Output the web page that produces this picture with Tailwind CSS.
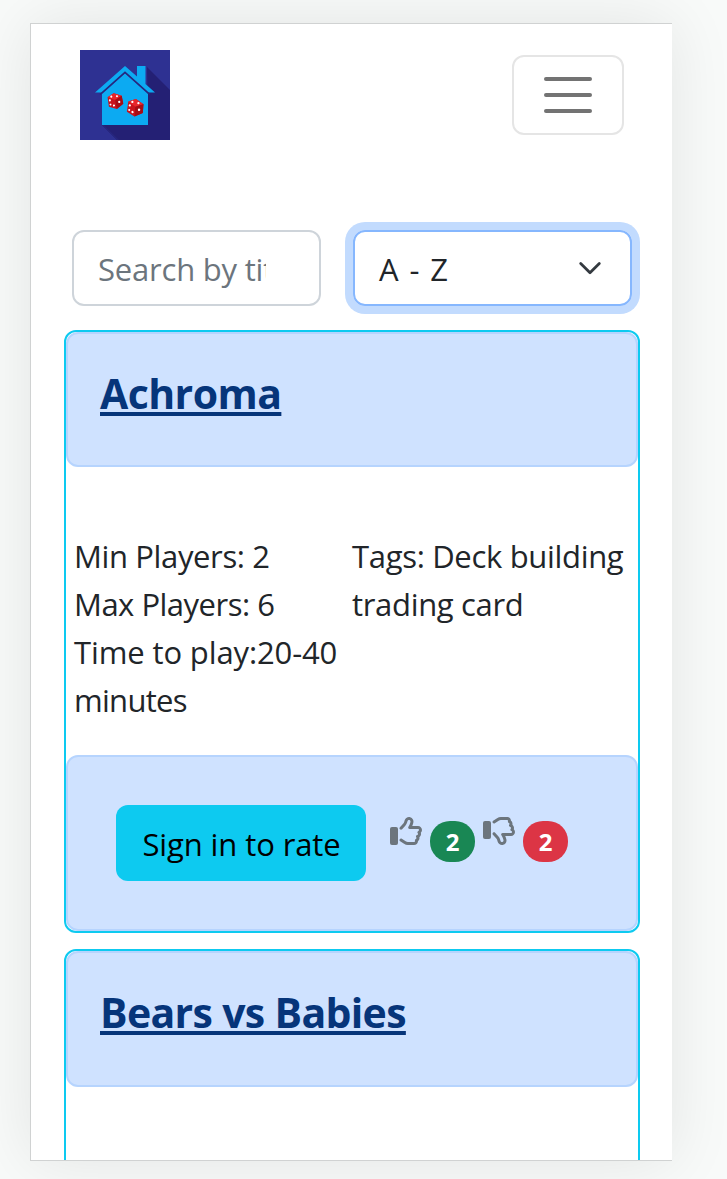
<!DOCTYPE html>
<html lang="en">
<head>
<meta charset="utf-8">
<title>Board games</title>
<script src="https://cdn.jsdelivr.net/npm/@tailwindcss/browser@4"></script>
</head>
<body class="h-[1179px] overflow-hidden bg-[#f8faf9] pt-[23px] pl-[30px] font-['Open_Sans','Noto_Sans',sans-serif] text-[31px] leading-[48px] text-[#212529]">
<svg class="hidden">
  <symbol id="hand" viewBox="0 0 512 512"><path d="M323.8 34.8c-38.2-10.9-78.1 11.2-89 49.4l-5.7 20c-3.7 13-10.4 25-19.5 35l-51.3 56.4c-8.9 9.8-8.2 25 1.6 33.9s25 8.2 33.9-1.6l51.3-56.4c14.1-15.5 24.4-34 30.1-54.1l5.7-20c3.6-12.7 16.9-20.1 29.7-16.5s20.1 16.9 16.5 29.7l-5.7 20c-5.7 19.9-14.7 38.7-26.6 55.5c-5.2 7.3-5.8 16.9-1.7 24.9s12.3 13 21.3 13L448 224c8.8 0 16 7.2 16 16c0 6.8-4.3 12.7-10.4 15c-7.4 2.8-13 9-14.9 16.7s.1 15.8 5.3 21.7c2.5 2.8 4 6.5 4 10.6c0 7.8-5.6 14.3-13 15.7c-8.2 1.6-15.1 7.3-18 15.2s-1.6 16.7 3.6 23.3c2.1 2.7 3.4 6.1 3.4 9.9c0 6.7-4.2 12.6-10.2 14.9c-11.5 4.5-17.7 16.9-14.4 28.8c.4 1.3 .6 2.8 .6 4.3c0 8.8-7.2 16-16 16H286.5c-12.6 0-25-3.7-35.5-10.7l-61.7-41.1c-11-7.4-25.9-4.4-33.3 6.7s-4.4 25.9 6.7 33.3l61.7 41.1c18.4 12.3 40 18.8 62.1 18.8H384c34.7 0 62.9-27.6 64-62c14.6-11.7 24-29.7 24-50c0-4.5-.5-8.8-1.3-13c15.4-11.7 25.3-30.2 25.3-51c0-6.5-1-12.8-2.8-18.7C504.8 273.7 512 257.7 512 240c0-35.3-28.6-64-64-64l-92.3 0c4.7-10.4 8.7-21.2 11.8-32.2l5.7-20c10.9-38.2-11.2-78.1-49.4-89z"/></symbol>
  <symbol id="die" viewBox="2.500 1 16.500 18"><path fill="#c9141c" d="M3 5 10 1.500 18 5.500 18.500 14 11 18.500 3 15z"/><path fill="#e8262b" d="M3 5 10 1.500 18 5.500 10.500 9z"/><path fill="#a60d14" d="M10.500 9 18 5.500 18.500 14 11 18.500z"/><g fill="#fff"><circle cx="7" cy="4.800" r="1.100"/><circle cx="13" cy="5.200" r="1.100"/><circle cx="5" cy="8.500" r="1.100"/><circle cx="8.500" cy="14.500" r="1.100"/><circle cx="5" cy="13" r="1"/><circle cx="14.500" cy="11.500" r="1.200"/></g></symbol>
</svg>
<div class="h-[1138px] w-[642px] overflow-hidden border-y border-l border-[#d0d2d2] bg-white shadow-[0_0_60px_rgba(0,0,0,0.09)]">
  <header class="flex items-center justify-between pt-[26px] pr-12 pl-[49px]">
    <svg class="size-[90px]" viewBox="0 0 90 90">
      <path fill="#2e3192" d="M0 0h90v90H0z"/>
      <path fill="#242074" d="M67 17 90 40v50H37L22 75l46-2z"/>
      <path fill="#27277f" d="M22 73.500 39 90H37L22 75z"/>
      <path fill="#0caaf2" d="M15 42.500 45 16 57 26.500V16h8.500v18L75 42.500h-7L45 22 22 42.500z"/>
      <path fill="#0caaf2" d="M22 44 45 23.500 68 44v31H22z"/>
      <path fill="none" stroke="#24297f" stroke-width="1.500" d="M20 44.500 45 22.300 70 44.500"/>
      <g transform="rotate(-8 35.500 51)"><use href="#die" x="27" y="42.500" width="17" height="17"/></g>
      <g transform="rotate(8 55.500 57.500)"><use href="#die" x="46.500" y="48.500" width="18" height="18.500"/></g>
    </svg>
    <button class="flex h-20 w-28 flex-col items-center justify-center gap-3 rounded-xl border-2 border-[#e5e5e5]">
      <span class="h-1 w-12 rounded-full bg-[#737373]"></span>
      <span class="h-1 w-12 rounded-full bg-[#737373]"></span>
      <span class="h-1 w-12 rounded-full bg-[#737373]"></span>
    </button>
  </header>
  <div class="mt-[90px] flex gap-8 pl-[41px]">
    <div class="h-[76px] w-[249px] rounded-xl border-2 border-[#ced4da] px-6 pt-[13px] text-[#6c757d]"><div class="w-[168px] overflow-hidden tracking-[-0.2px] whitespace-nowrap">Search by title</div></div>
    <div class="flex h-[76px] w-[279px] items-center justify-between rounded-xl border-2 border-[#86b7fe] pr-7 pl-6 ring-8 ring-[#c2dbfe]"><span class="pt-0.5 tracking-[1.4px]">A - Z</span>
      <svg class="h-6 w-6" viewBox="0 0 24 24" fill="none" stroke="#343a40" stroke-width="2.800" stroke-linecap="round" stroke-linejoin="round"><path d="m2.700 7.500 9.300 9.300 9.300-9.300"/></svg>
    </div>
  </div>
  <article class="mt-6 ml-[33px] h-[603px] w-[576px] rounded-xl border-2 border-[#0dcaf0]">
    <div class="h-[135px] rounded-xl border-2 border-[#b6d4fe] bg-[#cfe2ff] px-8 pt-[30px]"><a class="text-[41px] leading-[58px] font-bold tracking-[-0.57px] whitespace-nowrap text-[#06357a] underline decoration-4 underline-offset-[3px]">Achroma</a></div>
    <div class="flex h-[288px] pt-[65px] pl-2 whitespace-nowrap">
      <div class="w-[278px]">
        <p class="tracking-[-0.37px]">Min Players: 2</p>
        <p class="tracking-[-0.5px]">Max Players: 6</p>
        <p class="tracking-[-0.12px]">Time to play:20-40</p>
        <p class="tracking-[-0.7px]">minutes</p>
      </div>
      <div class="tracking-[-0.32px]"><p>Tags: Deck building</p><p>trading card</p></div>
    </div>
    <div class="flex h-[176px] items-start rounded-xl border-2 border-[#b6d4fe] bg-[#cfe2ff] pt-12 pl-12">
      <button class="h-[76px] w-[250px] rounded-xl bg-[#0dcaf0] pt-0.5 pl-px tracking-[-0.1px] whitespace-nowrap text-black">Sign in to rate</button>
      <svg class="mt-[10px] ml-6 size-8 text-[#6c757d]" fill="currentColor" viewBox="0 0 512 512"><use href="#hand"/><rect y="192" width="128" height="288" rx="32"/></svg>
      <span class="mt-4 ml-2 flex h-[41px] w-[45px] items-center justify-center rounded-[20px] bg-[#198754] text-2xl font-bold text-white">2</span>
      <svg class="mt-[10px] ml-2 size-8 text-[#6c757d]" fill="currentColor" viewBox="0 0 512 512"><g transform="matrix(1 0 0 -1 0 512)"><use href="#hand"/></g><rect y="96" width="128" height="288" rx="32"/></svg>
      <span class="mt-4 ml-2 flex h-[41px] w-[45px] items-center justify-center rounded-[20px] bg-[#dc3545] text-2xl font-bold text-white">2</span>
    </div>
  </article>
  <article class="mt-4 ml-[33px] h-[603px] w-[576px] rounded-xl border-2 border-[#0dcaf0]">
    <div class="h-[136px] rounded-xl border-2 border-[#b6d4fe] bg-[#cfe2ff] px-8 pt-[30px]"><a class="text-[41px] leading-[58px] font-bold tracking-[-0.67px] whitespace-nowrap text-[#06357a] underline decoration-4 underline-offset-[3px]">Bears vs Babies</a></div>
  </article>
</div>
</body>
</html>
